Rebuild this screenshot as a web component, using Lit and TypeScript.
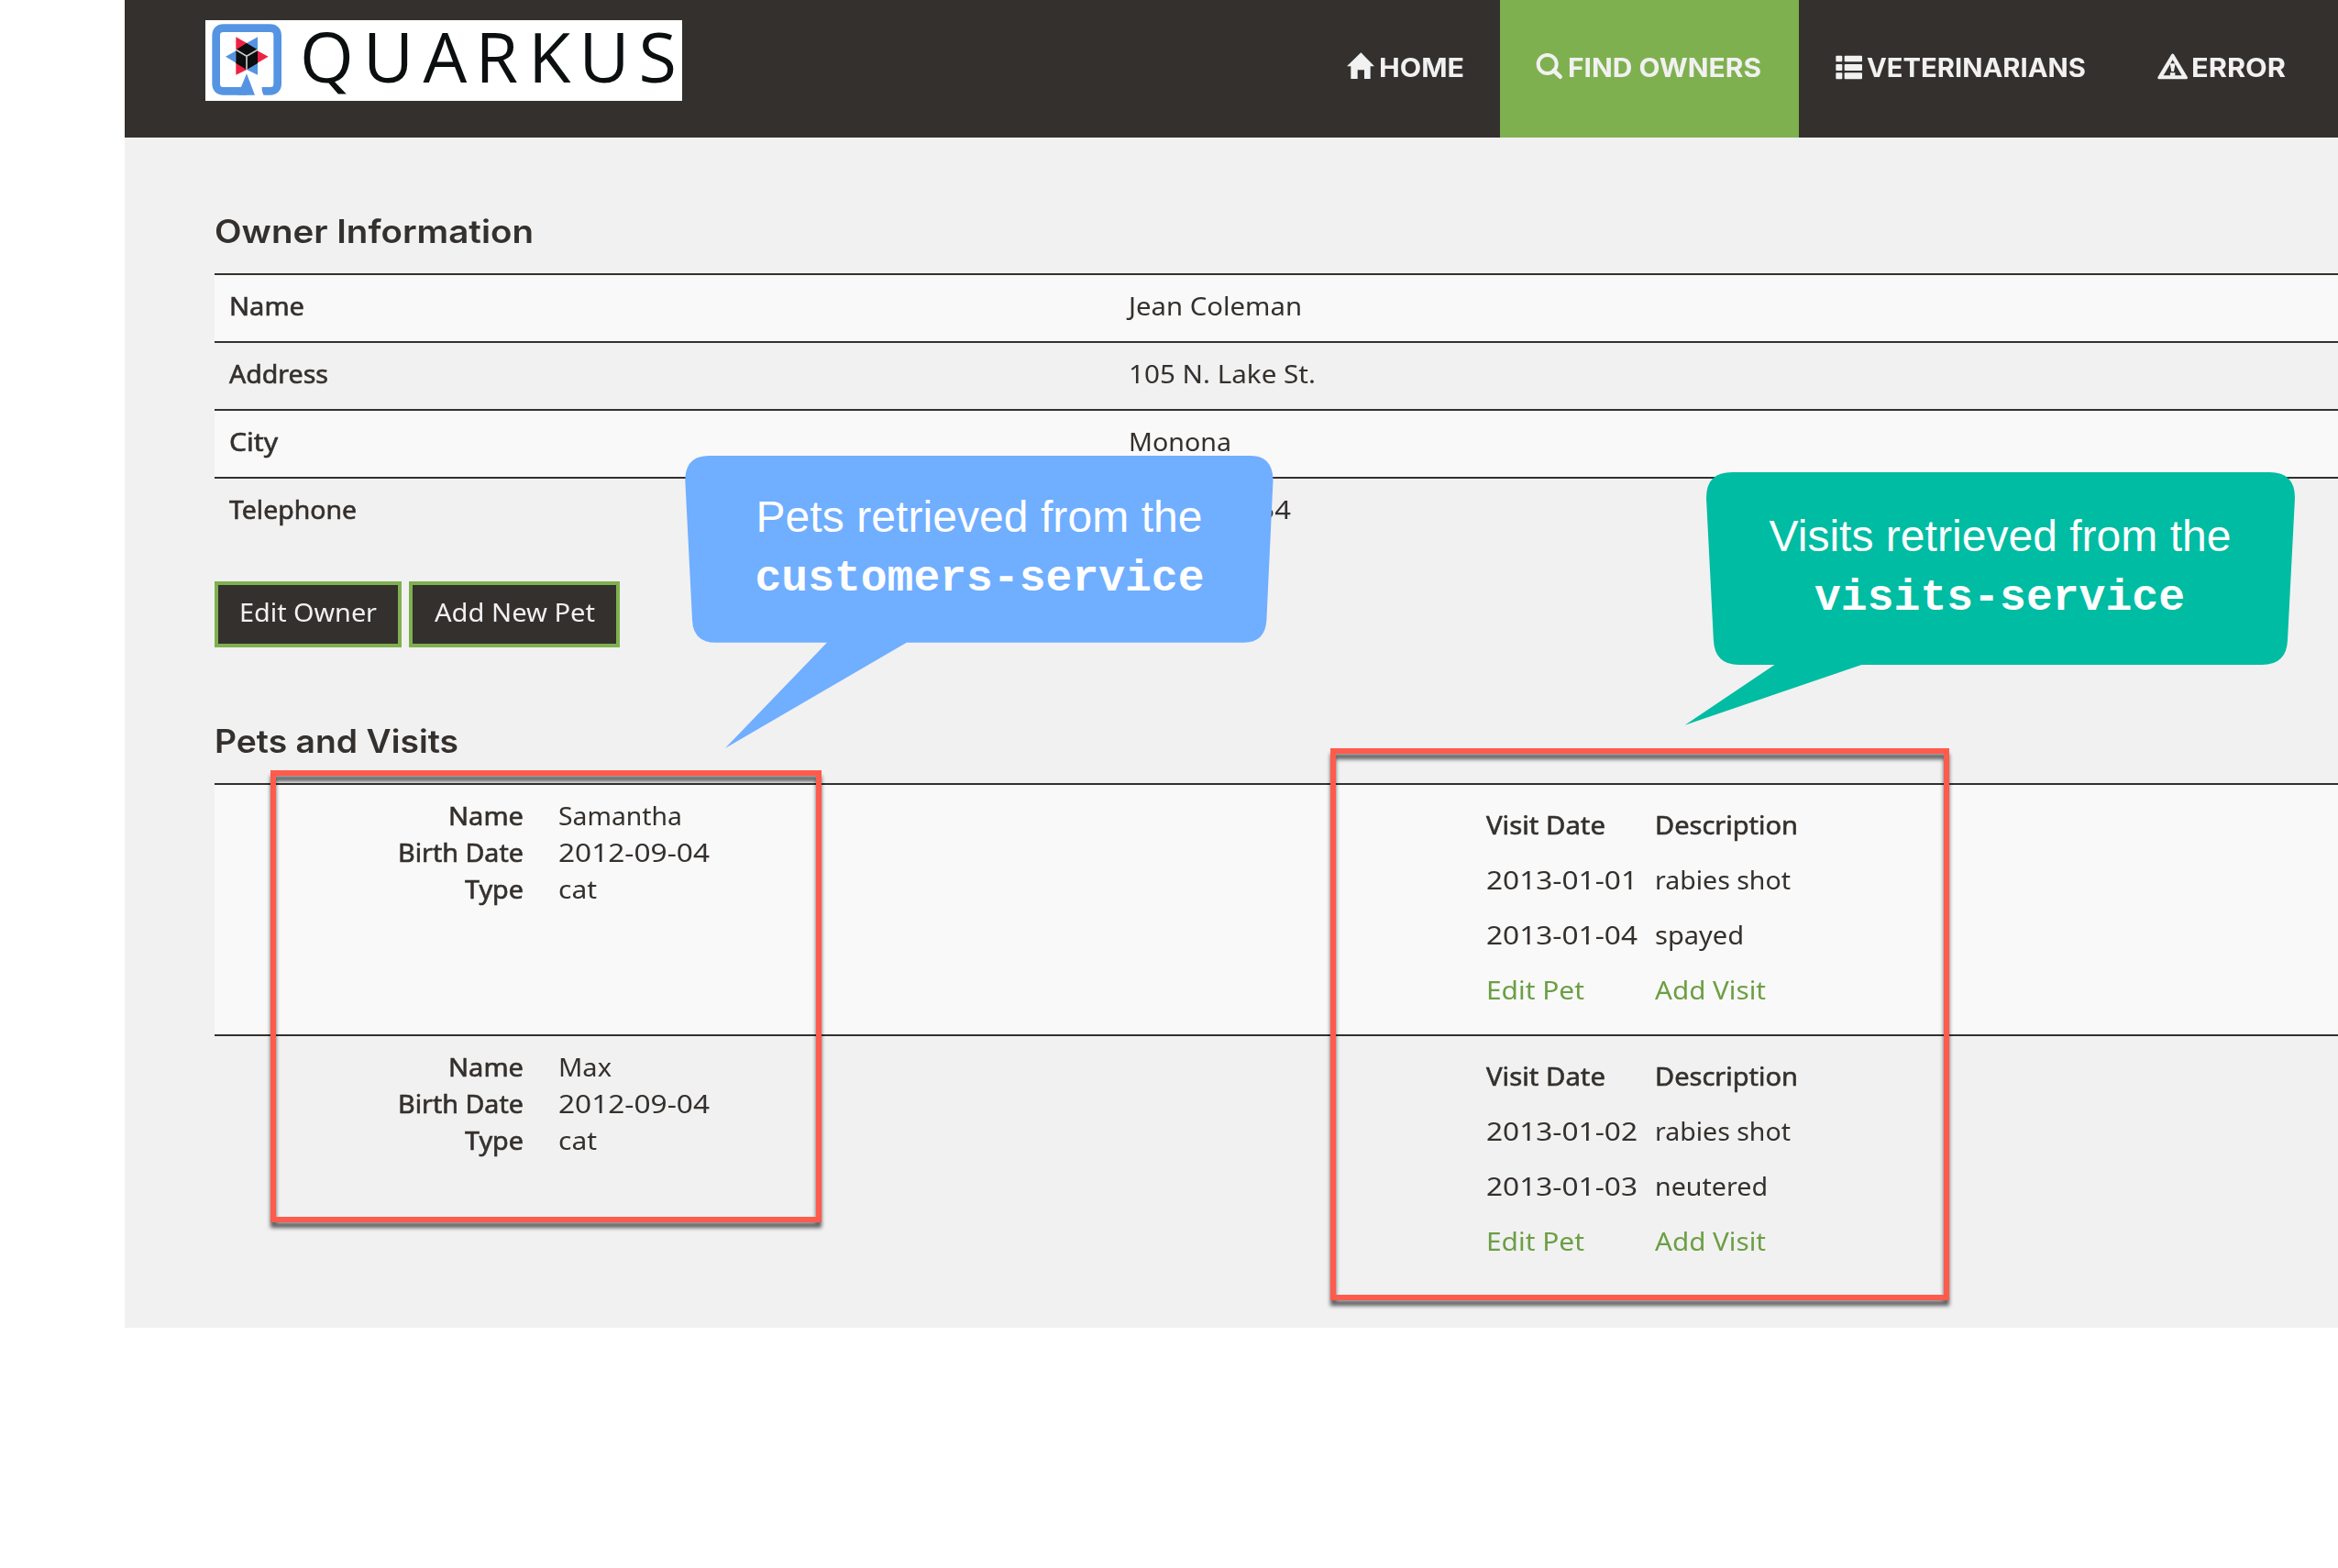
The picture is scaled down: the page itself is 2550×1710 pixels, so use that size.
import { LitElement, html, css, svg } from "lit";
import { customElement, property } from "lit/decorators.js";

/** A single line of text stretched so that it fills a given width. */
@customElement("fit-text")
class FitText extends LitElement {
  @property({ type: Number }) w = 100;
  @property() text = "";

  static styles = css`
    :host { display: inline-block; white-space: nowrap; text-align: left; }
    .run { display: inline-block; white-space: nowrap; transform-origin: 0 50%; }
  `;

  render() {
    return html`<span class="run">${this.text}</span>`;
  }

  updated() {
    const run = this.renderRoot.querySelector(".run") as HTMLElement;
    run.style.transform = "none";
    const natural = run.getBoundingClientRect().width;
    run.style.transform = `scaleX(${this.w / natural})`;
    this.style.width = `${this.w}px`;
  }
}

type T = [string, number];
const t = ([text, w]: T) => html`<fit-text .text=${text} .w=${w}></fit-text>`;

const icons = {
  home: svg`<path d="M-3 43 43 -2 87 43H74V84H54V55H32V84H10V43Z"/>`,
  search: svg`<circle cx="35" cy="36" r="30" fill="none" stroke="#f1f1f1" stroke-width="12"/>
    <path d="M56 57 77 77" stroke="#f1f1f1" stroke-width="14" stroke-linecap="round"/>`,
  list: svg`<rect x="1" y="8" width="21" height="20" rx="3"/><rect x="29" y="8" width="58" height="20" rx="3"/>
    <rect x="1" y="36" width="21" height="21" rx="3"/><rect x="29" y="36" width="58" height="21" rx="3"/>
    <rect x="1" y="64" width="21" height="21" rx="3"/><rect x="29" y="64" width="58" height="21" rx="3"/>`,
  warning: svg`<path fill-rule="evenodd" d="M37 4Q41 -1 45 4L90 79Q91 84 87 84.500H-5Q-9 84 -8 79ZM41 22 11 73H71Z"/>
    <path d="M32 34H50L45 60H37ZM33 64H49V74H33Z"/>`,
};

const nav: { icon: keyof typeof icons; label: T; cls: string }[] = [
  { icon: "home", label: ["HOME", 93], cls: "home" },
  { icon: "search", label: ["FIND OWNERS", 211], cls: "find active" },
  { icon: "list", label: ["VETERINARIANS", 239], cls: "vets" },
  { icon: "warning", label: ["ERROR", 103], cls: "error" },
];

const owner: [T, T][] = [
  [["Name", 82], ["Jean Coleman", 189]],
  [["Address", 108], ["105 N. Lake St.", 204]],
  [["City", 53], ["Monona", 112]],
  [["Telephone", 139], ["6085552654", 177]],
];

const pets: { info: [T, T][]; visits: [T, T][] }[] = [
  {
    info: [
      [["Name", 82], ["Samantha", 135]],
      [["Birth Date", 137], ["2012-09-04", 165]],
      [["Type", 64], ["cat", 42]],
    ],
    visits: [
      [["2013-01-01", 165], ["rabies shot", 148]],
      [["2013-01-04", 165], ["spayed", 97]],
    ],
  },
  {
    info: [
      [["Name", 82], ["Max", 58]],
      [["Birth Date", 137], ["2012-09-04", 165]],
      [["Type", 64], ["cat", 42]],
    ],
    visits: [
      [["2013-01-02", 165], ["rabies shot", 148]],
      [["2013-01-03", 165], ["neutered", 123]],
    ],
  },
];

@customElement("app-root")
class AppRoot extends LitElement {
  static styles = css`
    :host {
      display: block; position: relative; width: 2550px; height: 1710px; overflow: hidden;
      box-sizing: border-box; padding-left: 136px; background: #fff; color: #34302d;
      font: 400 28px/40px "Noto Sans", "Open Sans", sans-serif;
    }
    svg { display: block; overflow: visible; }
    .header { display: flex; height: 150px; background: #34302d; }
    .logo { margin: 22px 0 0 88px; width: 520px; height: 88px; background: #fff; }
    .wordmark { font: 400 75.500px "Open Sans", "Noto Sans", sans-serif; fill: #0b0f10; }
    .nav {
      display: flex; margin-left: auto; color: #f1f1f1; fill: #f1f1f1;
      font: 700 28px/40px Inter, "Open Sans", sans-serif;
    }
    .item { display: flex; gap: 6px; box-sizing: border-box; height: 150px; padding: 54px 0 0 40px; }
    .icon { width: 28px; height: 28px; margin-top: 4px; flex: none; }
    .home { width: 206px; }
    .find { width: 326px; }
    .vets { width: 354px; }
    .error { width: 234px; }
    .active { background: #7fb04f; }
    .content { box-sizing: border-box; height: 1298px; background: #f1f1f1; padding: 80px 0 0 98px; overflow: hidden; }
    .title { margin: 0; height: 68px; font: 600 35px/45px Inter, "Open Sans", sans-serif; }
    .row { box-sizing: border-box; height: 74px; border-top: 2px solid #34302d; display: flex; padding: 13px 16px 0; }
    .row:nth-child(odd), .pet:nth-child(odd) { background: #f9f9f9; }
    .strong { -webkit-text-stroke: 0.6px currentColor; }
    .key { width: 981px; flex: none; }
    .buttons { display: flex; gap: 8px; padding: 40px 0 80px; }
    .button {
      box-sizing: border-box; height: 72px; border: 4px solid #7fb04f; background: #34302d; color: #f1f1f1;
      padding: 9px 0 0 23px;
    }
    .edit { width: 204px; }
    .add { width: 230px; padding-left: 24px; }
    .pet { box-sizing: border-box; height: 274px; border-top: 2px solid #34302d; display: flex; padding-top: 13px; }
    .info { display: grid; grid-template-columns: 337px 981px; grid-auto-rows: 40px; column-gap: 38px; width: 1387px; flex: none; }
    .right { text-align: right; }
    .visits { display: grid; grid-template-columns: 184px 200px; grid-auto-rows: 60px; line-height: 60px; }
    .link { color: #6c9f44; }
    .frame { position: absolute; box-sizing: border-box; border: 6px solid #ff5b4d; filter: drop-shadow(0 6px 2px rgba(0, 0, 0, 0.62)); }
    .frame-pets { left: 295px; top: 840px; width: 601px; height: 493px; }
    .frame-visits { left: 1451px; top: 816px; width: 675px; height: 602px; }
    .notes { position: absolute; left: 0; top: 0; }
    .say { font: 400 48px "Liberation Sans", Arial, sans-serif; fill: #fff; text-anchor: middle; }
    .code { font: 700 48px "Liberation Mono", "Courier New", monospace; fill: #fff; text-anchor: middle; }
  `;

  private logo() {
    return html`<svg class="logo" viewBox="224 22 520 88">
      <g transform="translate(220 10) scale(.33333)">
        <path fill="none" stroke="#5594e2" stroke-width="26"
          d="M147 268H72Q47 268 47 243V87Q47 62 72 62H223Q248 62 248 87V243Q248 268 223 268H197"/>
        <path fill="#fff" d="M147 200 173 285H204L190 250H160Z"/>
        <path fill="#5594e2" d="M147 211 174 281H118Z"/>
        <path fill="#5594e2" d="M183 91V140L146 112ZM78 155 113 136V176ZM183 215V172L146 197Z"/>
        <path fill="#ee2244" d="M112 91V140L149 112ZM218 155 182 136V176ZM112 215V172L149 197Z"/>
        <path fill="#0b0d0e" d="M147 111 183 133V177L147 198 112 177V133Z"/>
        <path fill="none" stroke="#c9c9c9" stroke-width="5" d="M112 133 147 154 183 133M147 154V197"/>
      </g>
      <text class="wordmark" x="327 396 461.500 518.500 576.300 631.500 696.500" y="89.500">QUARKUS</text>
    </svg>`;
  }

  render() {
    return html`
      <div class="header">
        ${this.logo()}
        <div class="nav">
          ${nav.map((n) => html`<div class="item ${n.cls}">
            <svg class="icon" viewBox="0 0 84 84">${icons[n.icon]}</svg>${t(n.label)}
          </div>`)}
        </div>
      </div>
      <div class="content">
        <h2 class="title">${t(["Owner Information", 348])}</h2>
        <div>
          ${owner.map(([k, v]) => html`<div class="row"><div class="key strong">${t(k)}</div><div>${t(v)}</div></div>`)}
        </div>
        <div class="buttons">
          <div class="button edit">${t(["Edit Owner", 150])}</div>
          <div class="button add">${t(["Add New Pet", 175])}</div>
        </div>
        <h2 class="title">${t(["Pets and Visits", 266])}</h2>
        <div>
          ${pets.map((p) => html`<div class="pet">
            <div class="info">
              ${p.info.map(([k, v]) => html`<div class="right strong">${t(k)}</div><div>${t(v)}</div>`)}
            </div>
            <div class="visits">
              <div class="strong">${t(["Visit Date", 130])}</div><div class="strong">${t(["Description", 156])}</div>
              ${p.visits.map(([d, x]) => html`<div>${t(d)}</div><div>${t(x)}</div>`)}
              <div class="link">${t(["Edit Pet", 107])}</div><div class="link">${t(["Add Visit", 121])}</div>
            </div>
          </div>`)}
        </div>
      </div>
      <div class="frame frame-pets"></div>
      <div class="frame frame-visits"></div>
      <svg class="notes" width="2550" height="850" viewBox="0 0 2550 850">
        <path fill="#70aeff" d="M773.500 497H1363.500Q1388.300 497 1388.500 524L1381.400 676Q1380 700.700 1356.600 700.700H988.800L790.900 816 902 700.700H780.400Q756 700.700 755 676L747.300 524Q747.300 497 773.500 497Z"/>
        <text class="say" x="1068" y="580" textLength="487">Pets retrieved from the</text>
        <text class="code" x="1068.500" y="644" textLength="490">customers-service</text>
        <path fill="#00bca2" d="M1889 515H2475.500Q2503 515 2503 543L2495 698Q2494 725 2467 725H2030.400L1837.700 790.700 1935.500 725H1896.800Q1870 725 1868.900 698L1861 543Q1861 515 1889 515Z"/>
        <text class="say" x="2181.500" y="600.500" textLength="504">Visits retrieved from the</text>
        <text class="code" x="2181" y="665" textLength="404">visits-service</text>
      </svg>
    `;
  }
}
